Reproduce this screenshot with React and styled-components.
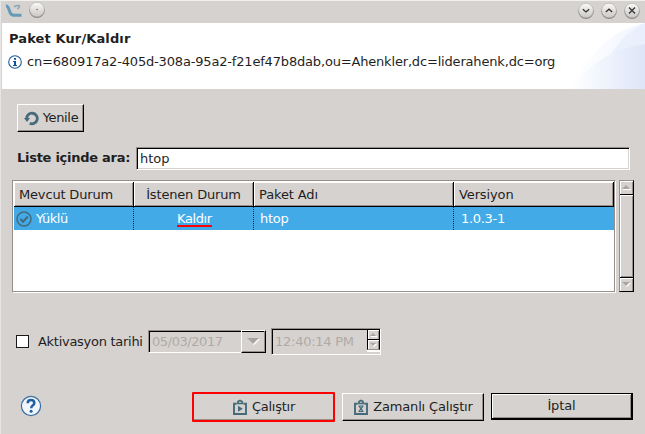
import React from "react";
import styled, { createGlobalStyle } from "styled-components";

const GREY = "#d6d2cf";
const SHADE = "#968f8c";
const SLATE = "#456a7a";

const GlobalStyle = createGlobalStyle`
  html, body { margin: 0; padding: 0; background: ${GREY}; overflow: hidden; }
  *, *::before, *::after { box-sizing: border-box; }
  body, button, input { font: 13px/16px "DejaVu Sans", sans-serif; color: #1f1f1f; }
  svg { display: block; flex: none; }
`;

const Window = styled.main`
  width: 645px;
  height: 434px;
  display: flex;
  flex-direction: column;
  background: ${GREY};
  border-top: 1px solid #f1f0ef;
  border-left: 1px solid #e8e6e5;
`;

const TitleBar = styled.header`
  height: 22px;
  display: flex;
  align-items: flex-start;
  padding: 0 5px 0 5px;
`;

const WindowControls = styled.div`
  display: flex;
  gap: 7px;
  margin-left: auto;
  padding-top: 1px;
`;

const Banner = styled.section`
  height: 66px;
  margin-left: 1px;
  background: #fff;
  position: relative;
  padding: 8px 0 0 7px;
`;

const BannerArt = styled.svg`
  position: absolute;
  right: 0;
  top: 0;
`;

const Title = styled.h1`
  margin: 0;
  font-size: 13px;
  line-height: 16px;
  font-weight: bold;
  letter-spacing: 0.12px;
  white-space: nowrap;
`;

const InfoLine = styled.div`
  display: flex;
  align-items: center;
  gap: 5px;
  margin: 7px 0 0 -1px;
  height: 16px;
`;

const Label = styled.span`
  white-space: nowrap;
  letter-spacing: ${(p) => p.$track ?? -0.12}px;
  font-weight: ${(p) => (p.$bold ? "bold" : "normal")};
`;

const Content = styled.section`
  display: flex;
  flex-direction: column;
  align-items: flex-start;
  padding: 15px 0 0 11px;
`;

const ToolRow = styled.div`
  display: flex;
  padding-left: 5px;
`;

const Button = styled.button`
  width: ${(p) => p.$w}px;
  height: ${(p) => p.$h || 28}px;
  display: flex;
  align-items: center;
  justify-content: center;
  gap: ${(p) => p.$gap || 0}px;
  padding: ${(p) => p.$pad || "0"};
  border: solid;
  border-width: 1px;
  border-color: #fff #000 #000 #fff;
  background: ${GREY};
  box-shadow: inset -1px -1px ${SHADE};
`;

const HighlightedButton = styled(Button)`
  border: 2px solid #f00;
  border-radius: 1px;
  box-shadow: inset 0 -1px ${SHADE};
`;

const DefaultButton = styled(Button)`
  border-width: 1px 2px 2px 1px;
  border-color: #000;
  box-shadow: inset 1px 1px #fff, inset -1px -1px ${SHADE};
`;

const SearchRow = styled.div`
  display: flex;
  align-items: center;
  width: 618px;
  height: 23px;
  margin-top: 15px;
  padding-left: 5px;
`;

const SearchLabel = styled(Label)`
  margin-top: -2px;
`;

const SearchInput = styled.input`
  width: 494px;
  height: 23px;
  margin-left: auto;
  padding: 0 3px 0 3px;
  border: 1px solid;
  border-color: ${SHADE} #fff #fff ${SHADE};
  box-shadow: inset 1px 1px #000, inset -1px -1px ${GREY};
  background: #fff;
  outline: 0;
`;

const TableArea = styled.div`
  display: flex;
  gap: 3px;
  margin-top: 10px;
`;

const Table = styled.div`
  width: 604px;
  height: 113px;
  padding: 1px 0 0 1px;
  border: 1px solid;
  border-color: ${SHADE} #fff #fff ${SHADE};
  box-shadow: inset -1px -1px ${SHADE};
  background: #fff;
`;

const columns = "120px 120px 200px 160px";

const HeaderRow = styled.div`
  display: grid;
  grid-template-columns: ${columns};
  height: 25px;
`;

const HeaderCell = styled.div`
  display: flex;
  align-items: center;
  justify-content: ${(p) => (p.$center ? "center" : "flex-start")};
  padding: 2px 0 0 ${(p) => (p.$center ? 0 : 5)}px;
  border: solid #000;
  border-width: 0 1px 1px 0;
  background: ${GREY};
  box-shadow: inset 1px 1px #fff, inset -1px -1px ${SHADE};
`;

const DataRow = styled.div`
  display: grid;
  grid-template-columns: ${columns};
  height: 23px;
  width: 600px;
  background: #43aae8;
  color: #fff;
`;

const Cell = styled.div`
  display: flex;
  align-items: center;
  gap: 4px;
  padding: 1px 0 0 ${(p) => p.$left || 6}px;
  border-right: ${(p) => (p.$last ? "0" : "1px dotted #123")};
`;

const Underlined = styled(Label)`
  height: 16px;
  border-bottom: 2px solid #f00;
`;

const ScrollBar = styled.div`
  width: 15px;
  height: 112px;
  display: flex;
  flex-direction: column;
  border: 1px solid;
  border-color: ${SHADE} #000 #000 ${SHADE};
`;

const ScrollArrow = styled.div`
  height: 13px;
  display: flex;
  align-items: center;
  justify-content: center;
  box-shadow: inset 1px 1px #fff, inset -1px 0 ${SHADE};
`;

const ScrollThumb = styled.div`
  flex: 1;
  border-top: 1px solid #000;
  border-bottom: 1px solid #000;
  box-shadow: inset 1px 1px #fff, inset -1px -1px ${SHADE};
`;

const ScheduleRow = styled.div`
  display: flex;
  align-items: center;
  height: 27px;
  margin: 35px 0 0 4px;
`;

const CheckBox = styled.div`
  width: 13px;
  height: 13px;
  margin-right: 9px;
  border: 1px solid #1a1a1a;
  background: #fff;
`;

const DateLabel = styled(Label)`
  width: 110px;
`;

const DateField = styled.div`
  width: 118px;
  height: 23px;
  display: flex;
  margin: 0 5px 0 0;
  border: solid;
  border-width: 1px 0 1px 1px;
  border-color: ${SHADE} #fff #fff ${SHADE};
  box-shadow: inset 1px 1px #000;
  color: #b0aaa7;
`;

const DateText = styled(Label)`
  padding: 3px 0 0 3px;
`;

const DropButton = styled.div`
  width: 25px;
  height: 23px;
  margin: -1px 0 0 auto;
  display: flex;
  align-items: center;
  justify-content: center;
  border: 1px solid;
  border-color: #fff #000 #000 #fff;
  box-shadow: inset -1px -1px ${SHADE};
`;

const TimeField = styled.div`
  width: 110px;
  height: 27px;
  display: flex;
  border: 1px solid;
  border-color: ${SHADE} #fff #fff ${SHADE};
  box-shadow: inset 1px 1px #000;
  color: #b0aaa7;
`;

const TimeText = styled(Label)`
  padding: 5px 0 0 3px;
`;

const Spinner = styled.div`
  width: 13px;
  height: 21px;
  margin-left: auto;
  border: 1px solid #000;
  border-bottom-color: ${SHADE};
  display: flex;
  flex-direction: column;
  box-shadow: 0 2px #fff;
`;

const SpinButton = styled.div`
  flex: 1;
  display: flex;
  align-items: center;
  justify-content: center;
  border-bottom: ${(p) => (p.$first ? "1px solid #000" : "0")};
  box-shadow: inset 1px 1px #fff, inset -1px 0 ${SHADE};
`;

const Footer = styled.footer`
  display: flex;
  align-items: flex-start;
  height: 30px;
  margin: 37px 0 0 8px;
`;

const HelpSlot = styled.div`
  width: 172px;
  padding-top: 3px;
`;

const FooterButtons = styled.div`
  display: flex;
  gap: 7px;
  button + button { margin-top: 1px; }
`;

const Triangle = ({ w = 8, h = 4, down }) => (
  <svg width={w + 1} height={h + 1} viewBox={`0 0 ${w + 1} ${h + 1}`}>
    <path d={down ? `M1 1H${w + 1}L${w / 2 + 1} ${h + 1}Z` : `M1 ${h + 1}H${w + 1}V${h}H1Z`} fill="#fff" />
    <path d={down ? `M0 0H${w}L${w / 2} ${h}Z` : `M0 ${h}H${w}L${w / 2} 0Z`} fill="#aaa4a1" />
  </svg>
);

const RoundControl = ({ children }) => (
  <svg width="16" height="18" viewBox="0 0 16 18">
    <defs>
      <linearGradient id="knob" x2="0" y2="1">
        <stop stopColor="#fafafa" />
        <stop offset="1" stopColor="#cbc8c5" />
      </linearGradient>
    </defs>
    <circle cx="8" cy="9.2" r="7.7" fill="#8e8986" />
    <circle cx="8" cy="8.5" r="7.3" fill="url(#knob)" stroke="#aaa6a3" strokeWidth=".5" />
    <g fill="none" stroke="#333" strokeWidth="1.3">{children}</g>
  </svg>
);

const LiderLogo = styled.svg`
  margin-top: 3px;
  margin-right: 6px;
`;

const JobIcon = ({ kind }) => (
  <svg width="16" height="17" viewBox="0 0 16 17" fill="none" stroke={SLATE} strokeWidth="1.9">
    <path d="M4.5 4.7H2V15H14V4.7H11.5" />
    <path d="M4.5 4.5H11.5M6 4V2.5L8 1.4L10 2.5V4" strokeWidth="1.7" />
    {kind === "play" ? (
      <path d="M6 6.8L10.8 9.8L6 12.8Z" fill={SLATE} stroke="none" />
    ) : (
      <path d="M5.5 7H10.5M5.5 12.5H10.5M6.2 7.3L9.8 12.2M9.8 7.3L6.2 12.2" strokeWidth="1.2" />
    )}
  </svg>
);

export default function App() {
  return (
    <Window>
      <GlobalStyle />
      <TitleBar>
        <LiderLogo width="17" height="14" viewBox="0 0 17 14" fill="none">
          <path d="M0 1.8C2.4 2 3 5.5 4 8.3Q5 11.3 8 11.3H15.5" stroke="#659bb5" strokeWidth="3" />
          <path d="M8 2.8Q12 1 13.4 1.8Q13.2 4 11.5 5" stroke="#8aa6b4" strokeWidth="1.6" />
        </LiderLogo>
        <RoundControl><circle cx="8" cy="8.5" r=".5" strokeWidth=".5" /></RoundControl>
        <WindowControls>
          <RoundControl><path d="M4.8 7.2L8 10L11.2 7.2" /></RoundControl>
          <RoundControl><path d="M4.8 10L8 7.2L11.2 10" /></RoundControl>
          <RoundControl><path d="M5 5.5L11 11.5M11 5.5L5 11.5" /></RoundControl>
        </WindowControls>
      </TitleBar>
      <Banner>
        <BannerArt width="76" height="66" viewBox="0 0 76 66">
          <defs>
            <linearGradient id="arcBack">
              <stop stopColor="#fff" />
              <stop offset="1" stopColor="#f0f5fd" />
            </linearGradient>
            <linearGradient id="arcFront">
              <stop stopColor="#fff" />
              <stop offset=".4" stopColor="#f1f5fd" />
              <stop offset="1" stopColor="#dde5f7" />
            </linearGradient>
          </defs>
          <path d="M2 66Q28 10 76 0V66Z" fill="url(#arcBack)" />
          <path d="M42 32Q54 10 76 0V25Z" fill="#e7eefb" opacity=".8" />
          <path d="M2 66Q28 28 76 21V66Z" fill="url(#arcFront)" />
        </BannerArt>
        <Title>Paket Kur/Kaldır</Title>
        <InfoLine>
          <svg width="14" height="14" viewBox="0 0 14 14">
            <circle cx="7" cy="7" r="6.3" fill="#fff" stroke="#1f5a9d" strokeWidth="1.1" />
            <path d="M6 3H8V4.7H6ZM5 6H8V10H9V11H5V10H6V7H5Z" fill="#0c50a0" />
          </svg>
          <Label $track={-0.175}>cn=680917a2-405d-308a-95a2-f21ef47b8dab,ou=Ahenkler,dc=liderahenk,dc=org</Label>
        </InfoLine>
      </Banner>
      <Content>
        <ToolRow>
          <Button $w={67} $gap={4} $pad="0 0 0 1px">
            <svg width="15" height="15" viewBox="0 0 15 15" fill="none">
              <path d="M2.7 8A5.3 5.3 0 1 1 5.7 12.3" stroke={SLATE} strokeWidth="2.8" />
              <path d="M0 7H6L3 11Z" fill={SLATE} />
            </svg>
            <Label $track={-0.35}>Yenile</Label>
          </Button>
        </ToolRow>
        <SearchRow>
          <SearchLabel $bold $track={-0.27}>Liste içinde ara:</SearchLabel>
          <SearchInput defaultValue="htop" />
        </SearchRow>
        <TableArea>
          <Table>
            <HeaderRow>
              <HeaderCell><Label $track={-0.17}>Mevcut Durum</Label></HeaderCell>
              <HeaderCell $center><Label $track={-0.17}>İstenen Durum</Label></HeaderCell>
              <HeaderCell><Label>Paket Adı</Label></HeaderCell>
              <HeaderCell><Label>Versiyon</Label></HeaderCell>
            </HeaderRow>
            <DataRow>
              <Cell $left={2}>
                <svg width="16" height="16" viewBox="0 0 16 16" fill="none" stroke={SLATE}>
                  <circle cx="8" cy="8" r="7" strokeWidth="1.5" />
                  <path d="M4.3 8L7 10.7L11.9 5.5" strokeWidth="2" />
                </svg>
                <Label $track={-0.45}>Yüklü</Label>
              </Cell>
              <Cell $left={43}><Underlined $track={-0.38}>Kaldır</Underlined></Cell>
              <Cell><Label $track={-0.3}>htop</Label></Cell>
              <Cell $last $left={7}><Label $track={-0.3}>1.0.3-1</Label></Cell>
            </DataRow>
          </Table>
          <ScrollBar>
            <ScrollArrow><Triangle /></ScrollArrow>
            <ScrollThumb />
            <ScrollArrow><Triangle down /></ScrollArrow>
          </ScrollBar>
        </TableArea>
        <ScheduleRow>
          <CheckBox />
          <DateLabel $track={-0.28}>Aktivasyon tarihi</DateLabel>
          <DateField>
            <DateText $track={-0.43}>05/03/2017</DateText>
            <DropButton><Triangle w={12} h={6} down /></DropButton>
          </DateField>
          <TimeField>
            <TimeText $track={-0.25}>12:40:14 PM</TimeText>
            <Spinner>
              <SpinButton $first><Triangle w={6} h={3} /></SpinButton>
              <SpinButton><Triangle w={6} h={3} down /></SpinButton>
            </Spinner>
          </TimeField>
        </ScheduleRow>
        <Footer>
          <HelpSlot>
            <svg width="22" height="22" viewBox="0 0 22 22" fill="none">
              <circle cx="11" cy="11" r="9.6" fill="#f0f6fc" stroke="#3b6ea2" strokeWidth="1.2" />
              <path d="M7.7 8.2Q7.7 5 11 5Q14.3 5 14.3 7.9Q14.3 9.3 12.7 10.5Q11.2 11.6 11.2 13.3" stroke="#215f9f" strokeWidth="2.5" />
              <circle cx="11.1" cy="16.3" r="1.5" fill="#215f9f" />
            </svg>
          </HelpSlot>
          <FooterButtons>
            <HighlightedButton $w={143} $h={30} $gap={4}>
              <JobIcon kind="play" /><Label $track={-0.25}>Çalıştır</Label>
            </HighlightedButton>
            <Button $w={142} $gap={4}>
              <JobIcon kind="timer" /><Label $track={-0.17}>Zamanlı Çalıştır</Label>
            </Button>
            <DefaultButton $w={142} $h={27}><Label>İptal</Label></DefaultButton>
          </FooterButtons>
        </Footer>
      </Content>
    </Window>
  );
}
